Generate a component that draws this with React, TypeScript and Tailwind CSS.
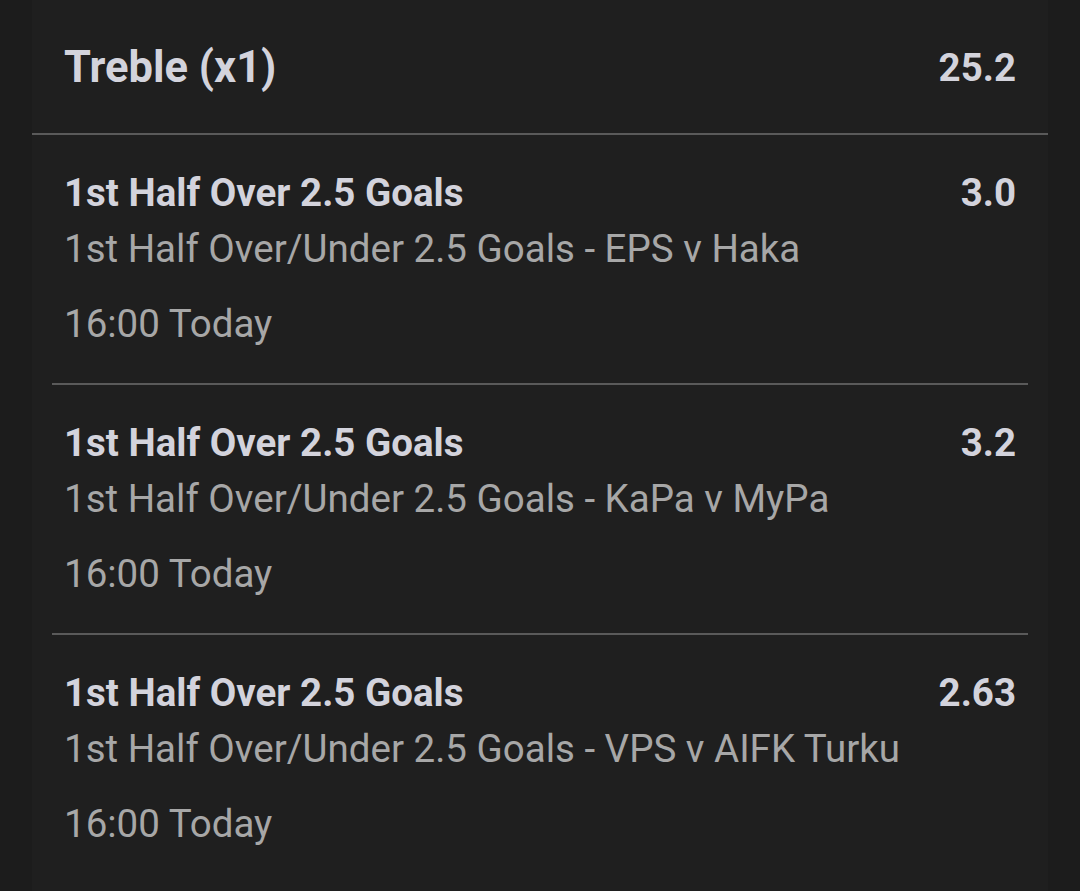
const legs = [
    { market: "1st Half Over/Under 2.5 Goals - EPS v Haka", odds: "3.0" },
    { market: "1st Half Over/Under 2.5 Goals - KaPa v MyPa", odds: "3.2" },
    { market: "1st Half Over/Under 2.5 Goals - VPS v AIFK Turku", odds: "2.63" },
];

const App = () => {
    return (
        <div
            className="w-[1080px] h-[891px] bg-[#1c1c1c] overflow-hidden"
            style={{ fontFamily: "Roboto, 'Noto Sans', sans-serif" }}
        >
            <div className="mx-[32px] h-full bg-[#1f1f1f]">
                <div className="flex items-center justify-between px-[32px] pt-[40px] pb-[37px]">
                    <h1 className="text-[43.5px] leading-[56px] font-bold text-[#d3d3dc]">Treble (x1)</h1>
                    <span className="text-[38.5px] leading-[56px] font-bold text-[#d3d3dc]">25.2</span>
                </div>
                <div className="h-[2px] bg-[#5a5a5a]" />
                {legs.map((leg, i) => (
                    <div key={i} className="mx-[20px]">
                        <div className="px-[12px] pt-[30px] pb-[31px]">
                            <div className="flex items-center justify-between">
                                <span className="text-[38.5px] leading-[56px] font-bold text-[#d3d3dc]">
                                    1st Half Over 2.5 Goals
                                </span>
                                <span className="text-[38.5px] leading-[56px] font-bold text-[#d3d3dc]">{leg.odds}</span>
                            </div>
                            <p className="text-[38.5px] leading-[56px] text-[#a7a7a7]">{leg.market}</p>
                            <p className="mt-[19px] text-[38.5px] leading-[56px] text-[#a7a7a7]">16:00 Today</p>
                        </div>
                        {i < legs.length - 1 && <div className="h-[2px] bg-[#5a5a5a]" />}
                    </div>
                ))}
            </div>
        </div>
    );
};

export default App;
